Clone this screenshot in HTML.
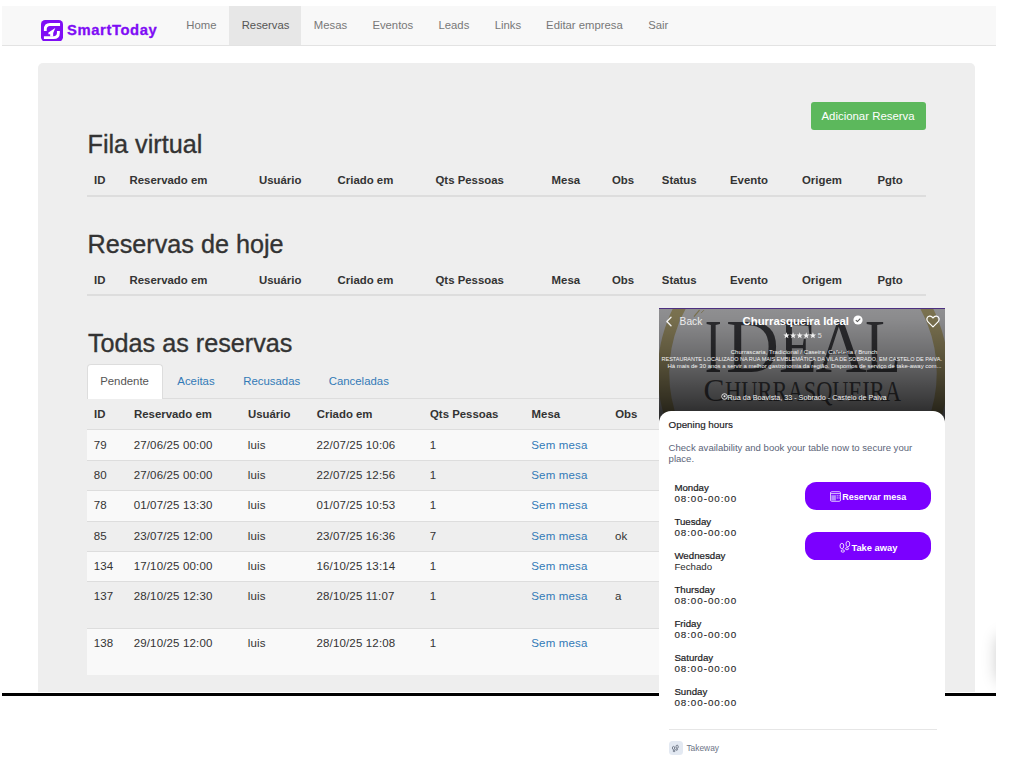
<!DOCTYPE html>
<html><head><meta charset="utf-8"><style>
html,body{margin:0;padding:0;background:#fff;width:1011px;height:764px;overflow:hidden;position:relative}
.t{position:absolute;white-space:nowrap;font-family:"Liberation Sans",sans-serif}
.r{position:absolute}
</style></head><body>
<div class="r" style="left:2px;top:6px;width:994.00px;height:40.00px;background:#f8f8f8;border-bottom:1px solid #e3e3e3;box-sizing:border-box"></div>
<div class="r" style="left:229px;top:6px;width:72.00px;height:39.00px;background:#e7e7e7"></div>
<div class="t" style="left:186.30px;top:19.83px;font-size:11.3px;line-height:11.3px;color:#777;">Home</div>
<div class="t" style="left:241.70px;top:19.83px;font-size:11.3px;line-height:11.3px;color:#555;">Reservas</div>
<div class="t" style="left:313.80px;top:19.83px;font-size:11.3px;line-height:11.3px;color:#777;">Mesas</div>
<div class="t" style="left:372.40px;top:19.83px;font-size:11.3px;line-height:11.3px;color:#777;">Eventos</div>
<div class="t" style="left:438.50px;top:19.83px;font-size:11.3px;line-height:11.3px;color:#777;">Leads</div>
<div class="t" style="left:494.70px;top:19.83px;font-size:11.3px;line-height:11.3px;color:#777;">Links</div>
<div class="t" style="left:546.10px;top:19.83px;font-size:11.3px;line-height:11.3px;color:#777;">Editar empresa</div>
<div class="t" style="left:648.20px;top:19.83px;font-size:11.3px;line-height:11.3px;color:#777;">Sair</div>
<svg class="r" style="left:40.9px;top:19.9px" width="22" height="21.5" viewBox="0 0 22 21.5">
<rect x="0" y="0" width="22" height="21.5" rx="4.2" fill="#7f0df5"/>
<path d="M19.05 4.5 H9 Q4.3 4.5 4.3 9.5 V11" fill="none" stroke="#fff" stroke-width="2.8"/>
<path d="M2.9 17.6 H12.5 Q17.4 17.6 17.4 12.7 V11" fill="none" stroke="#fff" stroke-width="2.9"/>
<polygon points="14.3,8.1 7.4,12.6 7.4,14.3 9.2,14.3 9.2,16.5 12.1,16.5 12.2,13" fill="#fff"/>
</svg>
<div class="t" style="left:67.00px;top:22.67px;font-size:14.8px;line-height:14.8px;color:#7f0df5;font-weight:700;letter-spacing:0.6px;-webkit-text-stroke:0.3px #7f0df5">SmartToday</div>
<div class="r" style="left:38px;top:62.7px;width:937.00px;height:628.90px;background:#eeeeee;border-radius:5px 5px 0 0"></div>
<div class="r" style="left:811px;top:102px;width:115.00px;height:27.50px;background:#5cb85c;border-radius:3px"></div>
<div class="t" style="left:821.50px;top:110.95px;font-size:11.4px;line-height:11.4px;color:#fff;">Adicionar Reserva</div>
<div class="t" style="left:87.50px;top:131.97px;font-size:25.2px;line-height:25.2px;color:#333;-webkit-text-stroke:0.35px #333">Fila virtual</div>
<div class="t" style="left:94.00px;top:175.25px;font-size:11.4px;line-height:11.4px;color:#333;font-weight:700;">ID</div>
<div class="t" style="left:129.50px;top:175.25px;font-size:11.4px;line-height:11.4px;color:#333;font-weight:700;">Reservado em</div>
<div class="t" style="left:259.00px;top:175.25px;font-size:11.4px;line-height:11.4px;color:#333;font-weight:700;">Usuário</div>
<div class="t" style="left:337.60px;top:175.25px;font-size:11.4px;line-height:11.4px;color:#333;font-weight:700;">Criado em</div>
<div class="t" style="left:435.50px;top:175.25px;font-size:11.4px;line-height:11.4px;color:#333;font-weight:700;">Qts Pessoas</div>
<div class="t" style="left:551.60px;top:175.25px;font-size:11.4px;line-height:11.4px;color:#333;font-weight:700;">Mesa</div>
<div class="t" style="left:612.00px;top:175.25px;font-size:11.4px;line-height:11.4px;color:#333;font-weight:700;">Obs</div>
<div class="t" style="left:661.80px;top:175.25px;font-size:11.4px;line-height:11.4px;color:#333;font-weight:700;">Status</div>
<div class="t" style="left:730.00px;top:175.25px;font-size:11.4px;line-height:11.4px;color:#333;font-weight:700;">Evento</div>
<div class="t" style="left:802.00px;top:175.25px;font-size:11.4px;line-height:11.4px;color:#333;font-weight:700;">Origem</div>
<div class="t" style="left:877.50px;top:175.25px;font-size:11.4px;line-height:11.4px;color:#333;font-weight:700;">Pgto</div>
<div class="r" style="left:87px;top:195.0px;width:839.00px;height:1.60px;background:#dddddd"></div>
<div class="t" style="left:87.50px;top:231.57px;font-size:25.2px;line-height:25.2px;color:#333;-webkit-text-stroke:0.35px #333">Reservas de hoje</div>
<div class="t" style="left:94.00px;top:275.35px;font-size:11.4px;line-height:11.4px;color:#333;font-weight:700;">ID</div>
<div class="t" style="left:129.50px;top:275.35px;font-size:11.4px;line-height:11.4px;color:#333;font-weight:700;">Reservado em</div>
<div class="t" style="left:259.00px;top:275.35px;font-size:11.4px;line-height:11.4px;color:#333;font-weight:700;">Usuário</div>
<div class="t" style="left:337.60px;top:275.35px;font-size:11.4px;line-height:11.4px;color:#333;font-weight:700;">Criado em</div>
<div class="t" style="left:435.50px;top:275.35px;font-size:11.4px;line-height:11.4px;color:#333;font-weight:700;">Qts Pessoas</div>
<div class="t" style="left:551.60px;top:275.35px;font-size:11.4px;line-height:11.4px;color:#333;font-weight:700;">Mesa</div>
<div class="t" style="left:612.00px;top:275.35px;font-size:11.4px;line-height:11.4px;color:#333;font-weight:700;">Obs</div>
<div class="t" style="left:661.80px;top:275.35px;font-size:11.4px;line-height:11.4px;color:#333;font-weight:700;">Status</div>
<div class="t" style="left:730.00px;top:275.35px;font-size:11.4px;line-height:11.4px;color:#333;font-weight:700;">Evento</div>
<div class="t" style="left:802.00px;top:275.35px;font-size:11.4px;line-height:11.4px;color:#333;font-weight:700;">Origem</div>
<div class="t" style="left:877.50px;top:275.35px;font-size:11.4px;line-height:11.4px;color:#333;font-weight:700;">Pgto</div>
<div class="r" style="left:87px;top:294.3px;width:839.00px;height:1.60px;background:#dddddd"></div>
<div class="t" style="left:88.00px;top:331.27px;font-size:25.2px;line-height:25.2px;color:#333;-webkit-text-stroke:0.35px #333">Todas as reservas</div>
<div class="r" style="left:87px;top:398px;width:839.00px;height:1.00px;background:#dddddd"></div>
<div class="r" style="left:87.4px;top:363.8px;width:75.40px;height:35.20px;background:#fff;border:1px solid #ddd;border-bottom:none;border-radius:4px 4px 0 0;box-sizing:border-box"></div>
<div class="t" style="left:100.20px;top:376.45px;font-size:11.4px;line-height:11.4px;color:#555;">Pendente</div>
<div class="t" style="left:177.30px;top:376.45px;font-size:11.4px;line-height:11.4px;color:#337ab7;">Aceitas</div>
<div class="t" style="left:243.20px;top:376.45px;font-size:11.4px;line-height:11.4px;color:#337ab7;">Recusadas</div>
<div class="t" style="left:328.70px;top:376.45px;font-size:11.4px;line-height:11.4px;color:#337ab7;">Canceladas</div>
<div class="t" style="left:94.00px;top:408.55px;font-size:11.4px;line-height:11.4px;color:#333;font-weight:700;">ID</div>
<div class="t" style="left:134.00px;top:408.55px;font-size:11.4px;line-height:11.4px;color:#333;font-weight:700;">Reservado em</div>
<div class="t" style="left:248.00px;top:408.55px;font-size:11.4px;line-height:11.4px;color:#333;font-weight:700;">Usuário</div>
<div class="t" style="left:316.80px;top:408.55px;font-size:11.4px;line-height:11.4px;color:#333;font-weight:700;">Criado em</div>
<div class="t" style="left:430.00px;top:408.55px;font-size:11.4px;line-height:11.4px;color:#333;font-weight:700;">Qts Pessoas</div>
<div class="t" style="left:531.60px;top:408.55px;font-size:11.4px;line-height:11.4px;color:#333;font-weight:700;">Mesa</div>
<div class="t" style="left:615.20px;top:408.55px;font-size:11.4px;line-height:11.4px;color:#333;font-weight:700;">Obs</div>
<div class="r" style="left:87px;top:428.8px;width:839.00px;height:1.60px;background:#dddddd"></div>
<div class="r" style="left:87px;top:430px;width:839.00px;height:29.90px;background:#f9f9f9"></div>
<div class="t" style="left:93.70px;top:440.07px;font-size:11.5px;line-height:11.5px;color:#333;letter-spacing:0.15px">79</div>
<div class="t" style="left:133.70px;top:440.07px;font-size:11.5px;line-height:11.5px;color:#333;letter-spacing:0.15px">27/06/25 00:00</div>
<div class="t" style="left:247.70px;top:440.07px;font-size:11.5px;line-height:11.5px;color:#333;letter-spacing:0.15px">luis</div>
<div class="t" style="left:316.50px;top:440.07px;font-size:11.5px;line-height:11.5px;color:#333;letter-spacing:0.15px">22/07/25 10:06</div>
<div class="t" style="left:429.70px;top:440.07px;font-size:11.5px;line-height:11.5px;color:#333;letter-spacing:0.15px">1</div>
<div class="t" style="left:531.30px;top:440.07px;font-size:11.5px;line-height:11.5px;color:#337ab7;letter-spacing:0.15px">Sem mesa</div>
<div class="r" style="left:87px;top:459.9px;width:839.00px;height:1.00px;background:#dddddd"></div>
<div class="t" style="left:93.70px;top:469.97px;font-size:11.5px;line-height:11.5px;color:#333;letter-spacing:0.15px">80</div>
<div class="t" style="left:133.70px;top:469.97px;font-size:11.5px;line-height:11.5px;color:#333;letter-spacing:0.15px">27/06/25 00:00</div>
<div class="t" style="left:247.70px;top:469.97px;font-size:11.5px;line-height:11.5px;color:#333;letter-spacing:0.15px">luis</div>
<div class="t" style="left:316.50px;top:469.97px;font-size:11.5px;line-height:11.5px;color:#333;letter-spacing:0.15px">22/07/25 12:56</div>
<div class="t" style="left:429.70px;top:469.97px;font-size:11.5px;line-height:11.5px;color:#333;letter-spacing:0.15px">1</div>
<div class="t" style="left:531.30px;top:469.97px;font-size:11.5px;line-height:11.5px;color:#337ab7;letter-spacing:0.15px">Sem mesa</div>
<div class="r" style="left:87px;top:490.3px;width:839.00px;height:30.40px;background:#f9f9f9"></div>
<div class="r" style="left:87px;top:490.3px;width:839.00px;height:1.00px;background:#dddddd"></div>
<div class="t" style="left:93.70px;top:500.37px;font-size:11.5px;line-height:11.5px;color:#333;letter-spacing:0.15px">78</div>
<div class="t" style="left:133.70px;top:500.37px;font-size:11.5px;line-height:11.5px;color:#333;letter-spacing:0.15px">01/07/25 13:30</div>
<div class="t" style="left:247.70px;top:500.37px;font-size:11.5px;line-height:11.5px;color:#333;letter-spacing:0.15px">luis</div>
<div class="t" style="left:316.50px;top:500.37px;font-size:11.5px;line-height:11.5px;color:#333;letter-spacing:0.15px">01/07/25 10:53</div>
<div class="t" style="left:429.70px;top:500.37px;font-size:11.5px;line-height:11.5px;color:#333;letter-spacing:0.15px">1</div>
<div class="t" style="left:531.30px;top:500.37px;font-size:11.5px;line-height:11.5px;color:#337ab7;letter-spacing:0.15px">Sem mesa</div>
<div class="r" style="left:87px;top:520.7px;width:839.00px;height:1.00px;background:#dddddd"></div>
<div class="t" style="left:93.70px;top:530.77px;font-size:11.5px;line-height:11.5px;color:#333;letter-spacing:0.15px">85</div>
<div class="t" style="left:133.70px;top:530.77px;font-size:11.5px;line-height:11.5px;color:#333;letter-spacing:0.15px">23/07/25 12:00</div>
<div class="t" style="left:247.70px;top:530.77px;font-size:11.5px;line-height:11.5px;color:#333;letter-spacing:0.15px">luis</div>
<div class="t" style="left:316.50px;top:530.77px;font-size:11.5px;line-height:11.5px;color:#333;letter-spacing:0.15px">23/07/25 16:36</div>
<div class="t" style="left:429.70px;top:530.77px;font-size:11.5px;line-height:11.5px;color:#333;letter-spacing:0.15px">7</div>
<div class="t" style="left:531.30px;top:530.77px;font-size:11.5px;line-height:11.5px;color:#337ab7;letter-spacing:0.15px">Sem mesa</div>
<div class="t" style="left:614.90px;top:530.77px;font-size:11.5px;line-height:11.5px;color:#333;letter-spacing:0.15px">ok</div>
<div class="r" style="left:87px;top:551.1px;width:839.00px;height:30.20px;background:#f9f9f9"></div>
<div class="r" style="left:87px;top:551.1px;width:839.00px;height:1.00px;background:#dddddd"></div>
<div class="t" style="left:93.70px;top:561.17px;font-size:11.5px;line-height:11.5px;color:#333;letter-spacing:0.15px">134</div>
<div class="t" style="left:133.70px;top:561.17px;font-size:11.5px;line-height:11.5px;color:#333;letter-spacing:0.15px">17/10/25 00:00</div>
<div class="t" style="left:247.70px;top:561.17px;font-size:11.5px;line-height:11.5px;color:#333;letter-spacing:0.15px">luis</div>
<div class="t" style="left:316.50px;top:561.17px;font-size:11.5px;line-height:11.5px;color:#333;letter-spacing:0.15px">16/10/25 13:14</div>
<div class="t" style="left:429.70px;top:561.17px;font-size:11.5px;line-height:11.5px;color:#333;letter-spacing:0.15px">1</div>
<div class="t" style="left:531.30px;top:561.17px;font-size:11.5px;line-height:11.5px;color:#337ab7;letter-spacing:0.15px">Sem mesa</div>
<div class="r" style="left:87px;top:581.3px;width:839.00px;height:1.00px;background:#dddddd"></div>
<div class="t" style="left:93.70px;top:591.37px;font-size:11.5px;line-height:11.5px;color:#333;letter-spacing:0.15px">137</div>
<div class="t" style="left:133.70px;top:591.37px;font-size:11.5px;line-height:11.5px;color:#333;letter-spacing:0.15px">28/10/25 12:30</div>
<div class="t" style="left:247.70px;top:591.37px;font-size:11.5px;line-height:11.5px;color:#333;letter-spacing:0.15px">luis</div>
<div class="t" style="left:316.50px;top:591.37px;font-size:11.5px;line-height:11.5px;color:#333;letter-spacing:0.15px">28/10/25 11:07</div>
<div class="t" style="left:429.70px;top:591.37px;font-size:11.5px;line-height:11.5px;color:#333;letter-spacing:0.15px">1</div>
<div class="t" style="left:531.30px;top:591.37px;font-size:11.5px;line-height:11.5px;color:#337ab7;letter-spacing:0.15px">Sem mesa</div>
<div class="t" style="left:614.90px;top:591.37px;font-size:11.5px;line-height:11.5px;color:#333;letter-spacing:0.15px">a</div>
<div class="r" style="left:87px;top:628.0px;width:839.00px;height:46.60px;background:#f9f9f9"></div>
<div class="r" style="left:87px;top:628.0px;width:839.00px;height:1.00px;background:#dddddd"></div>
<div class="t" style="left:93.70px;top:638.47px;font-size:11.5px;line-height:11.5px;color:#333;letter-spacing:0.15px">138</div>
<div class="t" style="left:133.70px;top:638.47px;font-size:11.5px;line-height:11.5px;color:#333;letter-spacing:0.15px">29/10/25 12:00</div>
<div class="t" style="left:247.70px;top:638.47px;font-size:11.5px;line-height:11.5px;color:#333;letter-spacing:0.15px">luis</div>
<div class="t" style="left:316.50px;top:638.47px;font-size:11.5px;line-height:11.5px;color:#333;letter-spacing:0.15px">28/10/25 12:08</div>
<div class="t" style="left:429.70px;top:638.47px;font-size:11.5px;line-height:11.5px;color:#333;letter-spacing:0.15px">1</div>
<div class="t" style="left:531.30px;top:638.47px;font-size:11.5px;line-height:11.5px;color:#337ab7;letter-spacing:0.15px">Sem mesa</div>
<div class="r" style="left:2px;top:693.1px;width:994.00px;height:2.70px;background:#000"></div>
<div class="r" style="left:950px;top:600px;width:46px;height:110px;overflow:hidden"><div class="r" style="left:47px;top:35px;width:40px;height:47px;background:#fff;box-shadow:0 0 16px rgba(0,0,0,0.22);border-radius:8px"></div></div>
<div class="r" style="left:659px;top:307.9px;width:286.3px;height:120px;overflow:hidden;background:#8f8f91;border-top:1.5px solid #4d2f80;box-sizing:border-box">
<svg class="r" style="left:0;top:0" width="287" height="120" viewBox="659 307.9 287 120">
<circle cx="803" cy="372" r="139.5" fill="none" stroke="#7b7250" stroke-width="11.5"/><path d="M699.5 309 L694 315.5 L696 313 Z" fill="none" stroke="#7b7250" stroke-width="1.2"/><path d="M704 309 L701 312" stroke="#7b7250" stroke-width="0.9"/>
<text x="704.8" y="370.6" font-family="Liberation Serif" font-size="76" fill="#2c2c2f" textLength="17" lengthAdjust="spacingAndGlyphs">I</text>
<text x="726" y="370.6" font-family="Liberation Serif" font-size="76" fill="#2c2c2f" textLength="53" lengthAdjust="spacingAndGlyphs">D</text>
<text x="779" y="370.6" font-family="Liberation Serif" font-size="76" fill="#2c2c2f" textLength="38" lengthAdjust="spacingAndGlyphs">E</text>
<text x="815.5" y="370.6" font-family="Liberation Serif" font-size="76" fill="#2c2c2f" textLength="51" lengthAdjust="spacingAndGlyphs">A</text>
<text x="865" y="370.6" font-family="Liberation Serif" font-size="76" fill="#2c2c2f" textLength="36" lengthAdjust="spacingAndGlyphs">L</text>
<text x="703.5" y="399.8" font-family="Liberation Serif" font-size="31" fill="#333336" textLength="21" lengthAdjust="spacingAndGlyphs">C</text>
<text x="725" y="399.8" font-family="Liberation Serif" font-size="28.5" fill="#333336" textLength="176" lengthAdjust="spacingAndGlyphs">HURRASQUEIRA</text>
</svg>
<div class="r" style="left:0;top:0;width:100%;height:120px;background:linear-gradient(180deg,rgba(0,0,0,0) 0px,rgba(0,0,0,0.03) 10px,rgba(0,0,0,0.22) 42px,rgba(0,0,0,0.59) 92px,rgba(0,0,0,0.68) 103px,rgba(0,0,0,0.72) 120px)"></div>
</div>
<svg class="r" style="left:665px;top:316px" width="8" height="11" viewBox="0 0 8 11"><path d="M6 1.3 L1.9 5.5 L6 9.8" fill="none" stroke="#f2f2f2" stroke-width="1.4" stroke-linecap="round" stroke-linejoin="round"/></svg>
<div class="t" style="left:679.60px;top:316.57px;font-size:10.2px;line-height:10.2px;color:#ececec;">Back</div>
<div class="t" style="left:742.60px;top:315.50px;font-size:11.34px;line-height:11.34px;color:#ffffff;font-weight:700;">Churrasqueira Ideal</div>
<svg class="r" style="left:852.5px;top:315.3px" width="10" height="10" viewBox="0 0 10 10"><circle cx="5" cy="5" r="4.6" fill="#fff"/><path d="M2.8 5.1 L4.4 6.6 L7.3 3.6" fill="none" stroke="#555" stroke-width="1.1"/></svg>
<svg class="r" style="left:0;top:0;overflow:visible" width="1" height="1"><polygon points="786.50,332.30 787.32,334.47 789.64,334.58 787.83,336.03 788.44,338.27 786.50,337.00 784.56,338.27 785.17,336.03 783.36,334.58 785.68,334.47" fill="#f0f0f0"/><polygon points="793.10,332.30 793.92,334.47 796.24,334.58 794.43,336.03 795.04,338.27 793.10,337.00 791.16,338.27 791.77,336.03 789.96,334.58 792.28,334.47" fill="#f0f0f0"/><polygon points="799.70,332.30 800.52,334.47 802.84,334.58 801.03,336.03 801.64,338.27 799.70,337.00 797.76,338.27 798.37,336.03 796.56,334.58 798.88,334.47" fill="#f0f0f0"/><polygon points="806.30,332.30 807.12,334.47 809.44,334.58 807.63,336.03 808.24,338.27 806.30,337.00 804.36,338.27 804.97,336.03 803.16,334.58 805.48,334.47" fill="#f0f0f0"/><polygon points="812.90,332.30 813.72,334.47 816.04,334.58 814.23,336.03 814.84,338.27 812.90,337.00 810.96,338.27 811.57,336.03 809.76,334.58 812.08,334.47" fill="#f0f0f0"/></svg>
<div class="t" style="left:817.80px;top:331.91px;font-size:7.2px;line-height:7.2px;color:#e0e0e0;">5</div>
<div class="t" style="left:730.70px;top:349.12px;font-size:6.0px;line-height:6.0px;color:#f4f4f4;letter-spacing:0.05px">Churrascaria, Tradicional / Caseira, Cafeteria / Brunch</div>
<div class="t" style="left:661.50px;top:356.54px;font-size:5.51px;line-height:5.51px;color:#f4f4f4;">RESTAURANTE LOCALIZADO NA RUA MAIS EMBLEMÁTICA DA VILA DE SOBRADO, EM CASTELO DE PAIVA.</div>
<div class="t" style="left:667.50px;top:364.15px;font-size:5.97px;line-height:5.97px;color:#f4f4f4;">Há mais de 30 anos a servir a melhor gastronomia da região. Dispomos de serviço de take-away com...</div>
<svg class="r" style="left:720.5px;top:393.2px" width="7" height="7" viewBox="0 0 7 7"><circle cx="3.5" cy="3.5" r="2.8" fill="none" stroke="#eee" stroke-width="0.9"/><circle cx="3.5" cy="3.3" r="1" fill="#eee"/></svg>
<div class="t" style="left:727.50px;top:393.51px;font-size:7.2px;line-height:7.2px;color:#f0f0f0;">Rua da Boavista, 33 - Sobrado - Castelo de Paiva</div>
<svg class="r" style="left:926px;top:315px" width="14" height="13" viewBox="0 0 14 13"><path d="M7 11.8 L2 6.8 C0.2 5 0.6 1.6 3.4 1.1 C5 0.8 6.3 1.8 7 3 C7.7 1.8 9 0.8 10.6 1.1 C13.4 1.6 13.8 5 12 6.8 Z" fill="none" stroke="#fff" stroke-width="1.2" stroke-linejoin="round"/></svg>
<div class="r" style="left:659px;top:410.7px;width:286.30px;height:359.30px;background:#fff;border-radius:12px 12px 0 0"></div>
<div class="t" style="left:668.60px;top:420.20px;font-size:9.8px;line-height:9.8px;color:#1d1d1f;-webkit-text-stroke:0.18px #1d1d1f">Opening hours</div>
<div class="t" style="left:668.60px;top:443.12px;font-size:9.55px;line-height:9.55px;color:#5b6478;">Check availability and book your table now to secure your</div>
<div class="t" style="left:668.60px;top:454.22px;font-size:9.55px;line-height:9.55px;color:#5b6478;">place.</div>
<div class="t" style="left:674.40px;top:482.79px;font-size:9.7px;line-height:9.7px;color:#1d1d1f;-webkit-text-stroke:0.22px #1d1d1f">Monday</div>
<div class="t" style="left:674.40px;top:493.96px;font-size:9.85px;line-height:9.85px;color:#2a2a2a;letter-spacing:0.93px;-webkit-text-stroke:0.12px #2a2a2a">08:00-00:00</div>
<div class="t" style="left:674.40px;top:516.87px;font-size:9.7px;line-height:9.7px;color:#1d1d1f;-webkit-text-stroke:0.22px #1d1d1f">Tuesday</div>
<div class="t" style="left:674.40px;top:528.04px;font-size:9.85px;line-height:9.85px;color:#2a2a2a;letter-spacing:0.93px;-webkit-text-stroke:0.12px #2a2a2a">08:00-00:00</div>
<div class="t" style="left:674.40px;top:550.95px;font-size:9.7px;line-height:9.7px;color:#1d1d1f;-webkit-text-stroke:0.22px #1d1d1f">Wednesday</div>
<div class="t" style="left:674.40px;top:562.25px;font-size:9.7px;line-height:9.7px;color:#2a2a2a;">Fechado</div>
<div class="t" style="left:674.40px;top:585.03px;font-size:9.7px;line-height:9.7px;color:#1d1d1f;-webkit-text-stroke:0.22px #1d1d1f">Thursday</div>
<div class="t" style="left:674.40px;top:596.20px;font-size:9.85px;line-height:9.85px;color:#2a2a2a;letter-spacing:0.93px;-webkit-text-stroke:0.12px #2a2a2a">08:00-00:00</div>
<div class="t" style="left:674.40px;top:619.11px;font-size:9.7px;line-height:9.7px;color:#1d1d1f;-webkit-text-stroke:0.22px #1d1d1f">Friday</div>
<div class="t" style="left:674.40px;top:630.28px;font-size:9.85px;line-height:9.85px;color:#2a2a2a;letter-spacing:0.93px;-webkit-text-stroke:0.12px #2a2a2a">08:00-00:00</div>
<div class="t" style="left:674.40px;top:653.19px;font-size:9.7px;line-height:9.7px;color:#1d1d1f;-webkit-text-stroke:0.22px #1d1d1f">Saturday</div>
<div class="t" style="left:674.40px;top:664.36px;font-size:9.85px;line-height:9.85px;color:#2a2a2a;letter-spacing:0.93px;-webkit-text-stroke:0.12px #2a2a2a">08:00-00:00</div>
<div class="t" style="left:674.40px;top:687.27px;font-size:9.7px;line-height:9.7px;color:#1d1d1f;-webkit-text-stroke:0.22px #1d1d1f">Sunday</div>
<div class="t" style="left:674.40px;top:698.44px;font-size:9.85px;line-height:9.85px;color:#2a2a2a;letter-spacing:0.93px;-webkit-text-stroke:0.12px #2a2a2a">08:00-00:00</div>
<div class="r" style="left:805.1px;top:481.7px;width:126.10px;height:28.10px;background:#7b00ff;border-radius:11.5px"></div>
<div class="r" style="left:805.1px;top:532.3px;width:126.10px;height:28.20px;background:#7b00ff;border-radius:11.5px"></div>
<svg class="r" style="left:830.3px;top:490.6px" width="11" height="11" viewBox="0 0 11 11"><rect x="0.5" y="0.7" width="10" height="9.6" rx="1.3" fill="none" stroke="#e6d6ff" stroke-width="0.9"/><line x1="0.5" y1="2.6" x2="10.5" y2="2.6" stroke="#e6d6ff" stroke-width="0.9"/><rect x="1.3" y="4.2" width="4.6" height="5.4" fill="#b88cff"/><rect x="6.6" y="4.2" width="1.3" height="1.3" fill="#c9a6ff"/><rect x="8.5" y="4.2" width="1.3" height="1.3" fill="#c9a6ff"/><rect x="6.6" y="6.3" width="1.3" height="1.3" fill="#c9a6ff"/><rect x="8.5" y="6.3" width="1.3" height="1.3" fill="#c9a6ff"/></svg>
<div class="t" style="left:842.20px;top:493.38px;font-size:9.0px;line-height:9.0px;color:#fff;font-weight:700;">Reservar mesa</div>
<svg class="r" style="left:836px;top:536px" width="20" height="20" viewBox="0 0 20 20"><ellipse cx="5.9" cy="10" rx="1.9" ry="2.7" fill="none" stroke="#ead9ff" stroke-width="0.95"/><ellipse cx="6.8" cy="15" rx="1.7" ry="1.15" fill="none" stroke="#ead9ff" stroke-width="0.95"/><ellipse cx="11.85" cy="8" rx="1.9" ry="2.8" fill="none" stroke="#ead9ff" stroke-width="0.95"/><ellipse cx="11" cy="12.7" rx="1.6" ry="1.05" fill="none" stroke="#ead9ff" stroke-width="0.95"/></svg>
<div class="t" style="left:851.40px;top:543.60px;font-size:9.33px;line-height:9.33px;color:#fff;font-weight:700;">Take away</div>
<div class="r" style="left:668.6px;top:729.2px;width:268.20px;height:1.00px;background:#e6e6e6"></div>
<div class="r" style="left:668.7px;top:740.5px;width:14.30px;height:14.50px;background:#e3e9f2;border-radius:3.5px"></div>
<svg class="r" style="left:669.5px;top:741.5px" width="12" height="12" viewBox="0 0 20 20"><ellipse cx="5.9" cy="10" rx="1.9" ry="2.7" fill="none" stroke="#5b6575" stroke-width="1.3"/><ellipse cx="6.8" cy="15" rx="1.7" ry="1.15" fill="none" stroke="#5b6575" stroke-width="1.3"/><ellipse cx="11.85" cy="8" rx="1.9" ry="2.8" fill="none" stroke="#5b6575" stroke-width="1.3"/><ellipse cx="11" cy="12.7" rx="1.6" ry="1.05" fill="none" stroke="#5b6575" stroke-width="1.3"/></svg>
<div class="t" style="left:686.40px;top:743.71px;font-size:8.38px;line-height:8.38px;color:#6b7385;">Takeway</div>

<!--OVERLAY-->
</body></html>
